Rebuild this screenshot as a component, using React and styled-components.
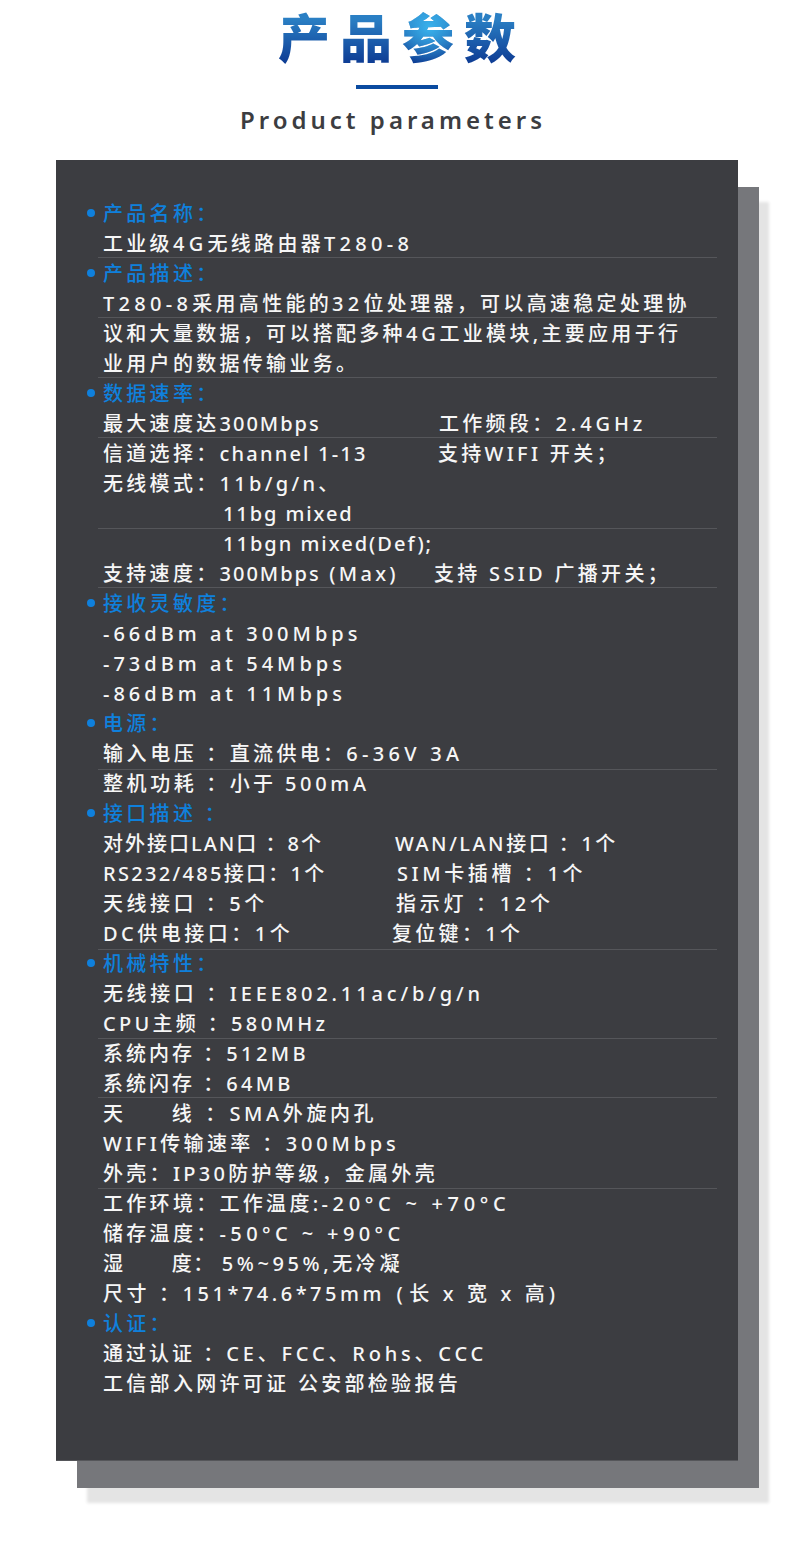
import React from "react";
import styled, { createGlobalStyle } from "styled-components";

const GlobalStyle = createGlobalStyle`
  html, body {
    margin: 0;
    padding: 0;
    background: #fff;
  }
`;

const Page = styled.div`
  width: 790px;
  height: 1568px;
  overflow: hidden;
  font-family: "Noto Sans", "Noto Sans CJK SC", sans-serif;
`;

const Header = styled.header`
  height: 160px;
  display: flex;
  flex-direction: column;
  align-items: center;
`;

const Title = styled.h1`
  margin: 5px 0 0 18px;
  width: 252px;
  height: 70px;
  font-family: "Liberation Sans", "Noto Sans CJK SC", sans-serif;
  font-size: 52px;
  line-height: 70px;
  font-weight: 900;
  letter-spacing: 10px;
  white-space: nowrap;
  color: transparent;
  background: radial-gradient(circle at 60% 32%, #3ab2ec 0, rgba(58, 178, 236, 0) 24%),
    linear-gradient(180deg, #2a7fc4 20%, #0f3f96 80%);
  -webkit-background-clip: text;
  background-clip: text;
`;

const Rule = styled.div`
  width: 82px;
  height: 4px;
  margin: 10px 0 0 4px;
  background: #0a4ba0;
`;

const Subtitle = styled.div`
  margin: 14px 0 0 -4px;
  font-size: 24px;
  line-height: 34px;
  font-weight: 600;
  letter-spacing: 4px;
  color: #3c3d41;
`;

const Stage = styled.div`
  position: relative;
  margin-left: 56px;
  width: 682px;
  height: 1301px;
`;

const Backing = styled.div`
  position: absolute;
  left: 21px;
  top: 27px;
  width: 682px;
  height: 1301px;
  background: #76777b;
  box-shadow: 10px 15px 3px #e4e4e4;
`;

const Panel = styled.div`
  position: relative;
  height: 100%;
  box-sizing: border-box;
  padding: 39px 21px 0 47px;
  background: #3c3d41;
  border-bottom: 1px solid #55565a;
`;

const Row = styled.div`
  position: relative;
  height: 30px;
  display: flex;
  align-items: center;
  padding-left: ${(p) => p.$indent || 0}px;
  font-size: 20px;
  line-height: 30px;
  font-weight: 500;
  white-space: pre;
  color: ${(p) => (p.$head ? "#0f80dc" : "#f6f6f6")};

  ${(p) =>
    p.$line !== undefined &&
    `&::after {
      content: "";
      position: absolute;
      left: -5px;
      right: 0;
      bottom: ${p.$line}px;
      height: 1px;
      background: #55565a;
    }`}

  ${(p) =>
    p.$head &&
    `&::before {
      content: "";
      position: absolute;
      left: -16px;
      top: 10px;
      width: 8px;
      height: 8px;
      border-radius: 50%;
      background: #0f80dc;
    }`}
`;

const Cell = styled.span`
  width: ${(p) => p.$w}px;
  flex: none;
`;

const Run = styled.span`
  letter-spacing: ${(p) => p.$ls}px;
`;

const rows = [
  { head: true, text: ["产品名称："] },
  { text: ["工业级", ["4G", 4.3], "无线路由器", ["T280-8", 4.3]], line: 1 },
  { head: true, text: ["产品描述："] },
  { text: [["T280-8", 4.3], "采用高性能的", ["32", 4.3], "位处理器，可以高速稳定处理协"], line: 1 },
  { text: ["议和大量数据，可以搭配多种", ["4G", 3.8], "工业模块,主要应用于行"] },
  { text: ["业用户的数据传输业务。"], line: 1 },
  { head: true, text: ["数据速率："] },
  { text: ["最大速度达", ["300Mbps", 2]], right: ["工作频段：", ["2.4GHz", 3.9]], w: 336, line: 1 },
  { text: ["信道选择：", ["channel 1-13", 2.2]], right: ["支持", ["WIFI", 3.3], " 开关；"], w: 335 },
  { text: ["无线模式：11b/g/n、"] },
  { text: [["11bg mixed", 1.9]], indent: 120, line: 0 },
  { text: [["11bgn mixed(Def);", 2]], indent: 120 },
  { text: ["支持速度：", ["300Mbps", 2], " (Max)"], right: ["支持 SSID 广播开关；"], w: 331, line: 1 },
  { head: true, text: ["接收灵敏度："] },
  { text: [["-66dBm at 300Mbps", 4]] },
  { text: [["-73dBm at 54Mbps", 4]] },
  { text: [["-86dBm at 11Mbps", 4]] },
  { head: true, text: ["电源："] },
  { text: [["输入电压 ：", 3.6], "直流供电：", ["6-36V 3A", 4.3]], line: -1 },
  { text: [["整机功耗 ：", 3.6], "小于 ", ["500mA", 3.7]] },
  { head: true, text: ["接口描述 ："] },
  { text: [["对外接口LAN口 ：8个", 2]], right: [["WAN/LAN接口 ：1个", 2.5]], w: 292 },
  { text: [["RS232/485接口：1个", 2.3]], right: [["SIM卡插槽 ：1个", 3.6]], w: 294 },
  { text: [["天线接口 ：5个", 3.5]], right: [["指示灯 ：12个", 3.7]], w: 293 },
  { text: [["DC供电接口：1个", 3.5]], right: ["复位键：1个"], w: 289, line: -1 },
  { head: true, text: ["机械特性："] },
  { text: [["无线接口 ：", 3.6], ["IEEE802.11ac/b/g/n", 3.85]] },
  { text: [["CPU主频 ：", 3.3], ["580MHz", 3.4]], line: 0 },
  { text: [["系统内存 ：", 3], ["512MB", 3.4]] },
  { text: [["系统闪存 ：", 3], ["64MB", 3.3]], line: 1 },
  { text: [["天      ", 2.5], ["线 ：", 4.2], ["SMA外旋内孔", 3.6]] },
  { text: [["WIFI传输速率 ：", 3.4], ["300Mbps", 3.8]] },
  { text: ["外壳：IP30防护等级，金属外壳"], line: 0 },
  { text: ["工作环境：工作温度:", ["-20°C ~ +70°C", 4.7]] },
  { text: ["储存温度：", ["-50°C ~ +90°C", 4.4]] },
  { text: [["湿      ", 2.5], ["度： ", 1.6], ["5%~95%,无冷凝", 3.6]] },
  { text: [["尺寸 ：", 3.6], ["151*74.6*75mm", 3.5], [" (", 6.5], ["长 x 宽 x 高)", 4.1]] },
  { head: true, text: ["认证："] },
  { text: [["通过认证 ：", 3], ["CE、FCC、Rohs、CCC", 3.8]] },
  { text: ["工信部入网许可证 公安部检验报告"] },
];

const renderRuns = (runs) =>
  runs.map((run, i) =>
    Array.isArray(run) ? (
      <Run key={i} $ls={run[1]}>
        {run[0]}
      </Run>
    ) : (
      <Run key={i} $ls={3.3}>
        {run}
      </Run>
    )
  );

export default function App() {
  return (
    <Page>
      <GlobalStyle />
      <Header>
        <Title>产品参数</Title>
        <Rule />
        <Subtitle>Product parameters</Subtitle>
      </Header>
      <Stage>
        <Backing />
        <Panel>
          {rows.map((r, i) => (
            <Row key={i} $head={r.head} $line={r.line} $indent={r.indent}>
              {r.right ? (
                <>
                  <Cell $w={r.w}>{renderRuns(r.text)}</Cell>
                  <span>{renderRuns(r.right)}</span>
                </>
              ) : (
                <span>{renderRuns(r.text)}</span>
              )}
            </Row>
          ))}
        </Panel>
      </Stage>
    </Page>
  );
}
